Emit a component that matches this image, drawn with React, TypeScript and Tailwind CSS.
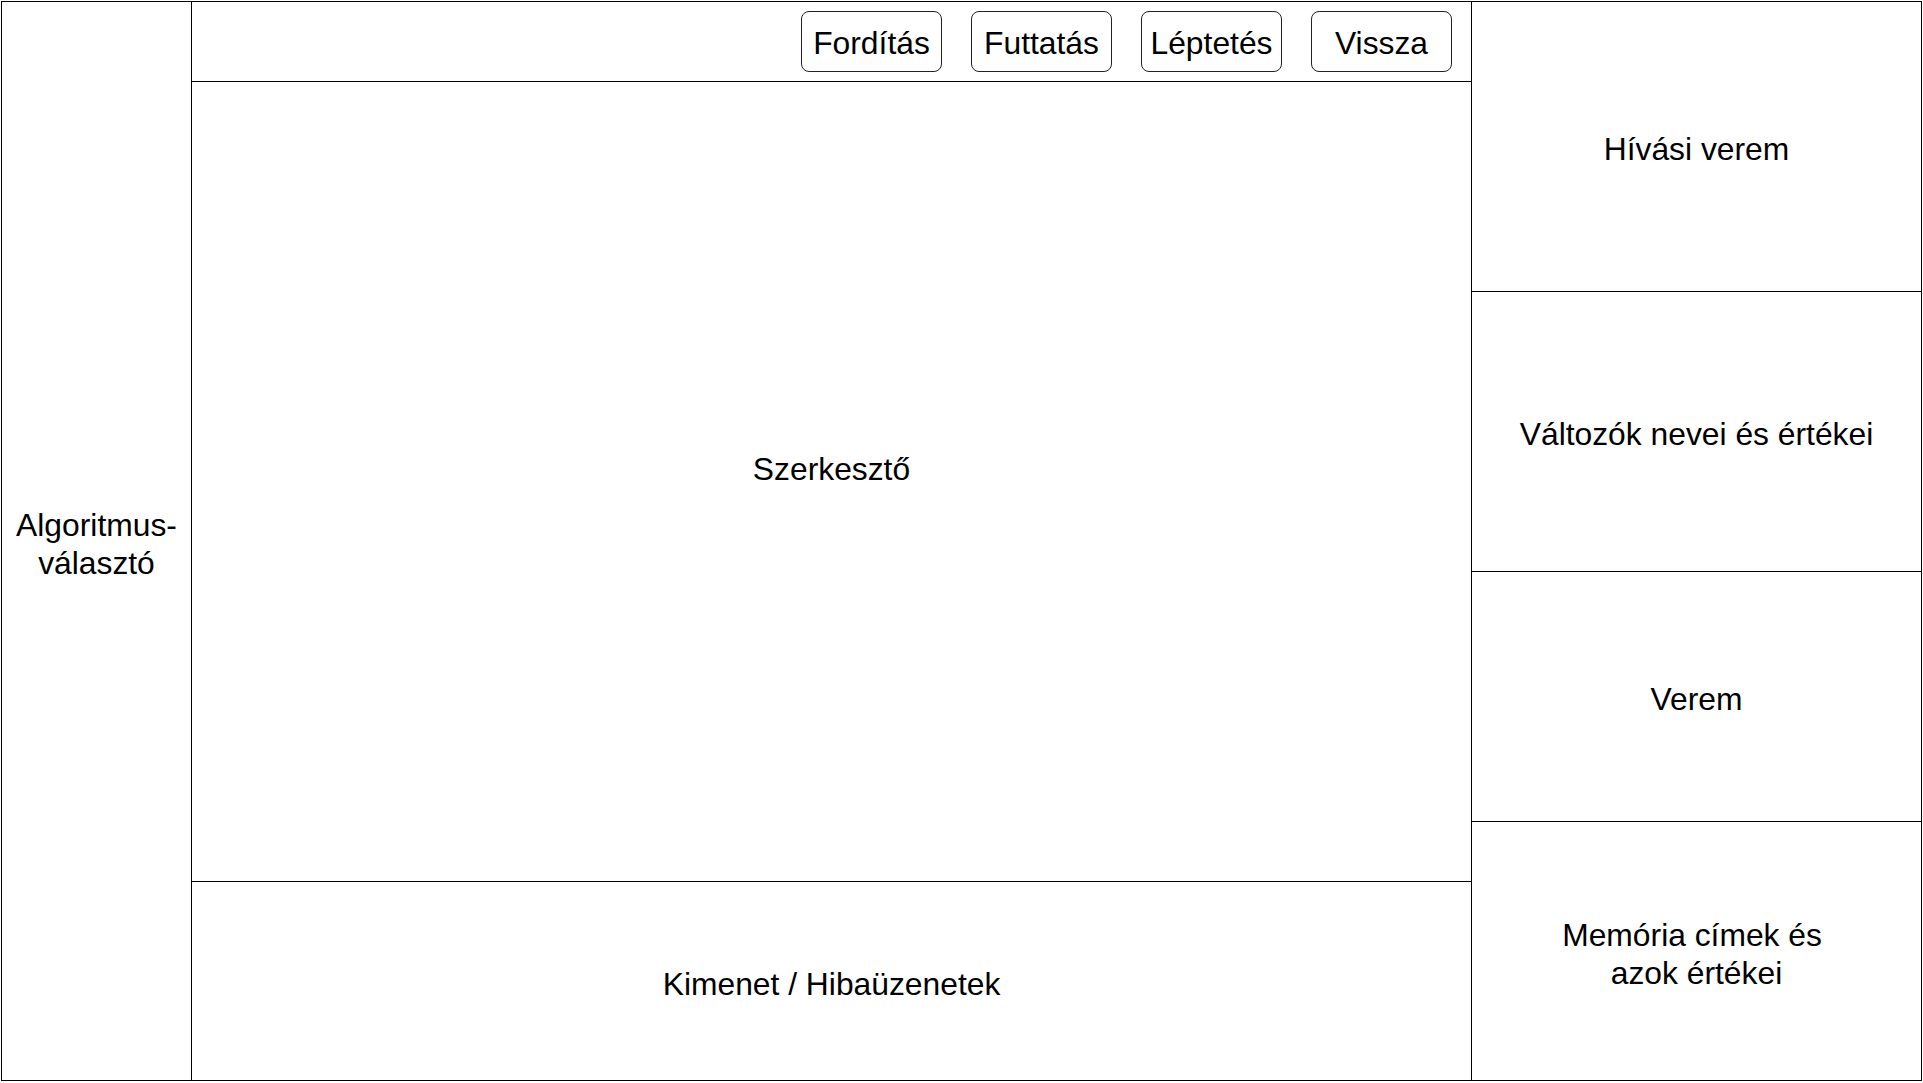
import React from "react";

const buttons = ["Fordítás", "Futtatás", "Léptetés", "Vissza"];

function Panel({
  className,
  children,
}: {
  className: string;
  children: React.ReactNode;
}) {
  return (
    <div className={`flex items-center justify-center pt-[5px] text-center ${className}`}>
      {children}
    </div>
  );
}

export default function App() {
  return (
    <div className="w-[1923px] h-[1083px] bg-white text-black font-['Liberation_Sans',Arial,sans-serif] text-[31.8px] leading-[38px]">
      <div className="ml-px mt-px flex w-[1921px] h-[1080px] border border-black">
        {/* left: algorithm picker */}
        <Panel className="w-[190px] shrink-0 border-r border-black">
          <span>
            Algoritmus-
            <br />
            választó
          </span>
        </Panel>

        {/* middle: toolbar, editor, output */}
        <div className="flex w-[1280px] shrink-0 flex-col border-r border-black">
          <div className="flex h-[80px] shrink-0 items-center justify-end gap-[29px] border-b border-black pr-[19px]">
            {buttons.map((b) => (
              <button
                key={b}
                className="flex h-[61px] w-[141px] items-center justify-center rounded-[8px] border border-[#222] bg-white pt-[3px]"
              >
                {b}
              </button>
            ))}
          </div>
          <Panel className="h-[800px] shrink-0 border-b border-black pb-[30px]">
            Szerkesztő
          </Panel>
          <Panel className="flex-1">Kimenet / Hibaüzenetek</Panel>
        </div>

        {/* right: runtime state */}
        <div className="flex flex-1 flex-col">
          <Panel className="h-[290px] shrink-0 border-b border-black">Hívási verem</Panel>
          <Panel className="h-[280px] shrink-0 border-b border-black">
            Változók nevei és értékei
          </Panel>
          <Panel className="h-[250px] shrink-0 border-b border-black">Verem</Panel>
          <Panel className="flex-1">
            <span>
              Memória címek és{"\u00a0"}
              <br />
              azok értékei
            </span>
          </Panel>
        </div>
      </div>
    </div>
  );
}
